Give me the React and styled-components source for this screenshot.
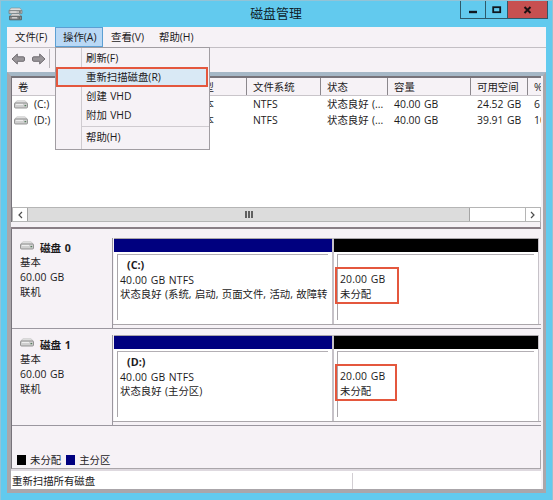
import React from "react";
import styled, { createGlobalStyle } from "styled-components";

const GlobalStyle = createGlobalStyle`
  * {
    box-sizing: border-box;
  }

  body {
    margin: 0;
    overflow: hidden;
    font-family: "Open Sans", "Noto Sans CJK SC", sans-serif;
    font-size: 10.4px;
    word-spacing: 0.7px;
    color: #1c1a1c;
  }
`;

const Window = styled.div`
  width: 553px;
  height: 500px;
  display: flex;
  flex-direction: column;
  background: #62caee;
  border: 1px solid #93c3d6;
  border-bottom: none;
  padding: 0 6px 7px 6px;
`;

const TitleBar = styled.header`
  height: 26px;
  flex: none;
  display: flex;
  align-items: flex-start;
  justify-content: space-between;

  .app-icon {
    margin: 6px 0 0 1px;
    width: 84px;
  }
`;

const Title = styled.h1`
  margin: 3px 0 0 0;
  font-size: 12.9px;
  line-height: 18px;
  font-weight: 400;
  color: #10232b;
`;

const WindowButtons = styled.div`
  display: flex;
  height: 18px;
  width: 88px;
  border: 1px solid #2d5a6b;
  border-top: none;
  margin-right: -2px;
`;

const WindowButton = styled.div`
  width: ${(props) => props.$width}px;
  background: ${(props) => (props.$close ? "#c75050" : "transparent")};
  border-right: ${(props) => (props.$close ? "none" : "1px solid #2d5a6b")};
  display: flex;
  align-items: center;
  justify-content: center;
`;

const Client = styled.main`
  flex: 1;
  min-height: 0;
  display: flex;
  flex-direction: column;
  background: #f6f2f6;
  width: 539px;
`;

const MenuBar = styled.nav`
  display: flex;
  height: 21px;
  flex: none;
  border-bottom: 1px solid #c3bfc4;
`;

const MenuItem = styled.div`
  position: relative;
  width: ${(props) => props.$width}px;
  height: 20px;
  line-height: 18px;
  padding-left: 7px;
  border: 1px solid ${(props) => (props.$open ? "#5c9fd3" : "transparent")};
  background: ${(props) => (props.$open ? "#b9d8f5" : "transparent")};
  white-space: nowrap;
`;

// drops over the toolbar and the volume list
const DropDown = styled.div`
  position: absolute;
  z-index: 2;
  left: -1px;
  top: 19px;
  width: 155px;
  height: 103px;
  padding-top: 1px;
  border: 1px solid #a19da2;
  background: linear-gradient(to right, #f6f2f6 25px, #cfcbd0 25px, #cfcbd0 26px, #f6f2f6 26px);
`;

const DropDownItem = styled.div`
  height: 19px;
  line-height: 19px;
  padding-left: 30px;

  ${(props) =>
    props.$selected &&
    `
    height: 20px;
    margin: -1px 1px 0 0;
    line-height: 16px;
    padding-left: 28px;
    border: 2px solid #e4573d;
    background: #d9e9f5;
  `}
`;

const DropDownLine = styled.div`
  height: 1px;
  margin: 1px 0 1px 26px;
  background: #cfcbd0;
`;

const ToolBar = styled.div`
  display: flex;
  align-items: center;
  gap: 5px;
  height: 24px;
  flex: none;
  padding: 0 0 3px 4px;
`;

const ToolLine = styled.div`
  width: 1px;
  height: 19px;
  background: #b9b5ba;
  margin-left: -2px;
`;

const Frame = styled.div`
  flex: 1;
  min-height: 0;
  display: flex;
  flex-direction: column;
  border: solid #aaa6aa;
  border-width: 4px 3px 4px 4px;
  border-top-color: #a5b7c6;
`;

const VolumeList = styled.section`
  height: 146px;
  flex: none;
  margin-right: 2px;
  border: 1px solid #77737a;
  border-top-width: 2px;
  border-right: none;
  border-bottom: none;
  background: #fff;
  display: flex;
  flex-direction: column;
  overflow: hidden;
`;

const ListRow = styled.div`
  display: grid;
  grid-template-columns: 175px 60px 74px 67px 83px 57px 13px;
  flex: none;
  height: 15.7px;
  line-height: 15px;
  white-space: nowrap;

  > div {
    padding-left: 6px;
    display: flex;
    overflow: hidden;
  }

  svg {
    margin: 3px 6px 0 -4px;
    flex: none;
  }
`;

const HeaderRow = styled(ListRow)`
  height: 18px;
  line-height: 18px;
  background: #f6f2f6;
  border-bottom: 1px solid #c9c5ca;
  margin-bottom: 1px;

  > div:not(:last-child) {
    border-right: 1px solid #8b878c;
  }
`;

const ScrollBar = styled.div`
  display: flex;
  height: 15px;
  flex: none;
  margin-top: auto;
  border: 1px solid #b5b5b5;
`;

const ScrollButton = styled.div`
  width: 14px;
  display: flex;
  align-items: center;
  justify-content: center;
`;

const Thumb = styled.div`
  width: 443px;
  border: solid #a5a5a5;
  border-width: 0 1px;
  background: #dcdcdc;
  display: flex;
  align-items: center;
  justify-content: center;
  gap: 1px;

  i {
    width: 2px;
    height: 7px;
    background: #606060;
  }
`;

const ScrollTrack = styled.div`
  flex: 1;
  border-right: 1px solid #b5b5b5;
`;

const Splitter = styled.div`
  height: 7px;
  flex: none;
  margin-right: 2px;
  border-bottom: 2px solid #8a7f86;
  border-right: 1px solid #aaa6aa;
`;

const DiskView = styled.section`
  flex: 1;
  margin-right: 2px;
  display: flex;
  flex-direction: column;
  border-left: 1px solid #77737a;
  border-bottom: 1px solid #aaa6aa;
`;

const DiskRow = styled.div`
  display: flex;
  height: ${(props) => props.$height}px;
  padding-top: ${(props) => props.$top}px;
  border-bottom: 1px solid #9b979f;
`;

const DiskInfo = styled.div`
  width: 101px;
  flex: none;
  border-right: 1px solid #9b979f;
  padding: 1px 0 0 8px;
  line-height: 14.8px;

  p {
    margin: 0;
  }
`;

const DiskName = styled.div`
  display: flex;
  gap: 6px;
  font-size: 10.6px;
  font-weight: 700;
  height: 16px;
  line-height: 18px;

  svg {
    margin-top: 2px;
  }
`;

const Volumes = styled.div`
  display: flex;
  flex: 1;
  margin-bottom: 3px;
  padding: 0 2px 0 1px;
  border-bottom: 1px solid #aaa6aa;
`;

const Volume = styled.div`
  width: ${(props) => props.$width}px;
  display: flex;
  flex-direction: column;
  border-right: ${(props) => props.$gap}px solid #c6c2c8;
  background: #fff;
`;

const VolumeBar = styled.div`
  height: 14px;
  flex: none;
  background: ${(props) => props.$color};
  border-top: 1px solid #aaa6aa;
`;

const VolumeBody = styled.div`
  flex: 1;
  margin: 2px 4px 4px 3px;
  padding: 3px 0 0 2px;
  border-top: 1px solid #b3afb4;
  border-left: 1px solid #aaa6aa;
  line-height: 14.5px;
  white-space: nowrap;
`;

const VolumeName = styled.div`
  font-size: 10.8px;
  font-weight: 700;
  padding-left: 7px;
  height: 14.5px;
`;

const VolumeSize = styled.div`
  letter-spacing: 0.14px;
`;

const Marked = styled.div`
  width: ${(props) => props.$width}px;
  height: 37px;
  margin: 9px 0 0 -5px;
  padding: 3px 0 0 3px;
  border: 2px solid #e4573d;
`;

const Legend = styled.div`
  margin-top: auto;
  height: 18px;
  display: flex;
  align-items: center;
  padding: 1px 0 0 5px;
  border-right: 1px solid #aaa6aa;
`;

const Swatch = styled.span`
  width: 9px;
  height: 10px;
  margin-right: 4px;
  background: ${(props) => props.$color};

  &:not(:first-child) {
    margin-left: 5px;
  }
`;

const StatusBar = styled.footer`
  height: 20px;
  flex: none;
  display: flex;
  margin: 0 2px 0 0;
  padding-top: 2px;
  line-height: 17px;
  background: #fff;
  border-top: 2px solid #ded9df;
`;

const StatusText = styled.div`
  width: 342px;
  padding-left: 1px;
  border-right: 1px solid #d2ced3;
`;

const DriveIcon = () => (
  <svg width="14" height="9" viewBox="0 0 14 9">
    <path d="M3 .8h8L13.3 3H.7z" fill="#e6e6e6" stroke="#b5b5b5" strokeWidth=".6" />
    <rect x=".5" y="3" width="13" height="5" rx="1" fill="#cfcfcf" stroke="#828282" strokeWidth=".8" />
    <path d="M2 4.4h7" stroke="#f2f2f2" />
    <path d="M10.5 5.6h1.7" stroke="#557d5c" strokeWidth="1.3" />
  </svg>
);

const AppIcon = () => (
  <svg width="15" height="14" viewBox="0 0 15 14">
    <path d="M3 1h9l2 2.6H1z" fill="#ddd" stroke="#888" strokeWidth=".6" />
    <path d="M1 3.6h13v3H1z" fill="#bdbdbd" stroke="#777" strokeWidth=".7" />
    <path d="M4 7h7l2.4 2.2H1.6z" fill="#efefef" stroke="#777" strokeWidth=".5" />
    <path d="M1.6 9.2h11.8v3.6H1.6z" fill="#8f8f8f" stroke="#4f4f4f" strokeWidth=".8" />
    <path d="M2.5 5h6M4 10.8h5" stroke="#e9e9e9" />
    <path d="M11 5h1.8M10.5 11h1.5" stroke="#3f4a44" />
  </svg>
);

const Arrow = ({ right }) => (
  <svg width="15" height="12" viewBox="0 0 15 12">
    <path
      d="M1 6 6.3 1v2.8H12q1.5 0 1.5 1.2v2.2q0 1.1-1.5 1.1H6.3V11z"
      transform={right ? "translate(15 0) scale(-1 1)" : undefined}
      fill="#999599"
      stroke="#716d72"
      strokeWidth="1"
      strokeLinejoin="round"
    />
  </svg>
);

const Chevron = ({ right }) => (
  <svg width="6" height="8" viewBox="0 0 6 8">
    <path d={right ? "m1 1 3 3-3 3" : "M5 1 2 4l3 3"} fill="none" stroke="#4d4d4d" strokeWidth="1.2" />
  </svg>
);

const columns = ["卷", "类型", "文件系统", "状态", "容量", "可用空间", "%"];

const volumes = [
  ["(C:)", "基本", "NTFS", "状态良好 (...", "40.00 GB", "24.52 GB", "6"],
  ["(D:)", "基本", "NTFS", "状态良好 (...", "40.00 GB", "39.91 GB", "10"],
];

const disks = [
  {
    name: "磁盘 0",
    volume: "(C:)",
    status: "状态良好 (系统, 启动, 页面文件, 活动, 故障转",
    height: 100,
    top: 9,
    marked: 64,
  },
  {
    name: "磁盘 1",
    volume: "(D:)",
    status: "状态良好 (主分区)",
    height: 97,
    top: 6,
    marked: 62,
  },
];

/**
 *
 * @returns {JSX} - JSX representing the disk management window
 */
const App = () => {
  return (
    <>
      <GlobalStyle />
      <Window>
        <TitleBar>
          <div className="app-icon">
            <AppIcon />
          </div>
          <Title>磁盘管理</Title>
          <WindowButtons>
            <WindowButton $width={25}>
              <svg width="10" height="10">
                <path d="M1 7h8" stroke="#101820" strokeWidth="2.4" />
              </svg>
            </WindowButton>
            <WindowButton $width={22}>
              <svg width="10" height="8">
                <rect x="1.2" y="1.2" width="7" height="5" fill="none" stroke="#101820" strokeWidth="1.8" />
              </svg>
            </WindowButton>
            <WindowButton $width={39} $close>
              <svg width="9" height="8">
                <path d="m1.5 1 6 6m0-6-6 6" stroke="#1c1012" strokeWidth="2" />
              </svg>
            </WindowButton>
          </WindowButtons>
        </TitleBar>
        <Client>
          <MenuBar>
            <MenuItem $width={48}>文件(F)</MenuItem>
            <MenuItem $width={48} $open>
              操作(A)
              <DropDown>
                <DropDownItem>刷新(F)</DropDownItem>
                <DropDownItem $selected>重新扫描磁盘(R)</DropDownItem>
                <DropDownItem>创建 VHD</DropDownItem>
                <DropDownItem>附加 VHD</DropDownItem>
                <DropDownLine />
                <DropDownItem>帮助(H)</DropDownItem>
              </DropDown>
            </MenuItem>
            <MenuItem $width={48}>查看(V)</MenuItem>
            <MenuItem $width={48}>帮助(H)</MenuItem>
          </MenuBar>
          <ToolBar>
            <Arrow />
            <Arrow right />
            <ToolLine />
          </ToolBar>
          <Frame>
            <VolumeList>
              <HeaderRow>
                {columns.map((column) => (
                  <div key={column}>{column}</div>
                ))}
              </HeaderRow>
              {volumes.map((cells) => (
                <ListRow key={cells[0]}>
                  {cells.map((cell, i) => (
                    <div key={i}>
                      {i === 0 && <DriveIcon />}
                      {cell}
                    </div>
                  ))}
                </ListRow>
              ))}
              <ScrollBar>
                <ScrollButton>
                  <Chevron />
                </ScrollButton>
                <Thumb>
                  <i />
                  <i />
                  <i />
                </Thumb>
                <ScrollTrack />
                <ScrollButton>
                  <Chevron right />
                </ScrollButton>
              </ScrollBar>
            </VolumeList>
            <Splitter />
            <DiskView>
              {disks.map((disk) => (
                <DiskRow key={disk.name} $height={disk.height} $top={disk.top}>
                  <DiskInfo>
                    <DiskName>
                      <DriveIcon />
                      {disk.name}
                    </DiskName>
                    <p>基本</p>
                    <p>60.00 GB</p>
                    <p>联机</p>
                  </DiskInfo>
                  <Volumes>
                    <Volume $width={220} $gap={2}>
                      <VolumeBar $color="#00007f" />
                      <VolumeBody>
                        <VolumeName>{disk.volume}</VolumeName>
                        <VolumeSize>40.00 GB NTFS</VolumeSize>
                        <div>{disk.status}</div>
                      </VolumeBody>
                    </Volume>
                    <Volume $width={205} $gap={1}>
                      <VolumeBar $color="#000" />
                      <VolumeBody>
                        <Marked $width={disk.marked}>
                          <VolumeSize>20.00 GB</VolumeSize>
                          <div>未分配</div>
                        </Marked>
                      </VolumeBody>
                    </Volume>
                  </Volumes>
                </DiskRow>
              ))}
              <Legend>
                <Swatch $color="#000" />
                未分配
                <Swatch $color="#00007f" />
                主分区
              </Legend>
            </DiskView>
            <StatusBar>
              <StatusText>重新扫描所有磁盘</StatusText>
            </StatusBar>
          </Frame>
        </Client>
      </Window>
    </>
  );
};

export default App;
